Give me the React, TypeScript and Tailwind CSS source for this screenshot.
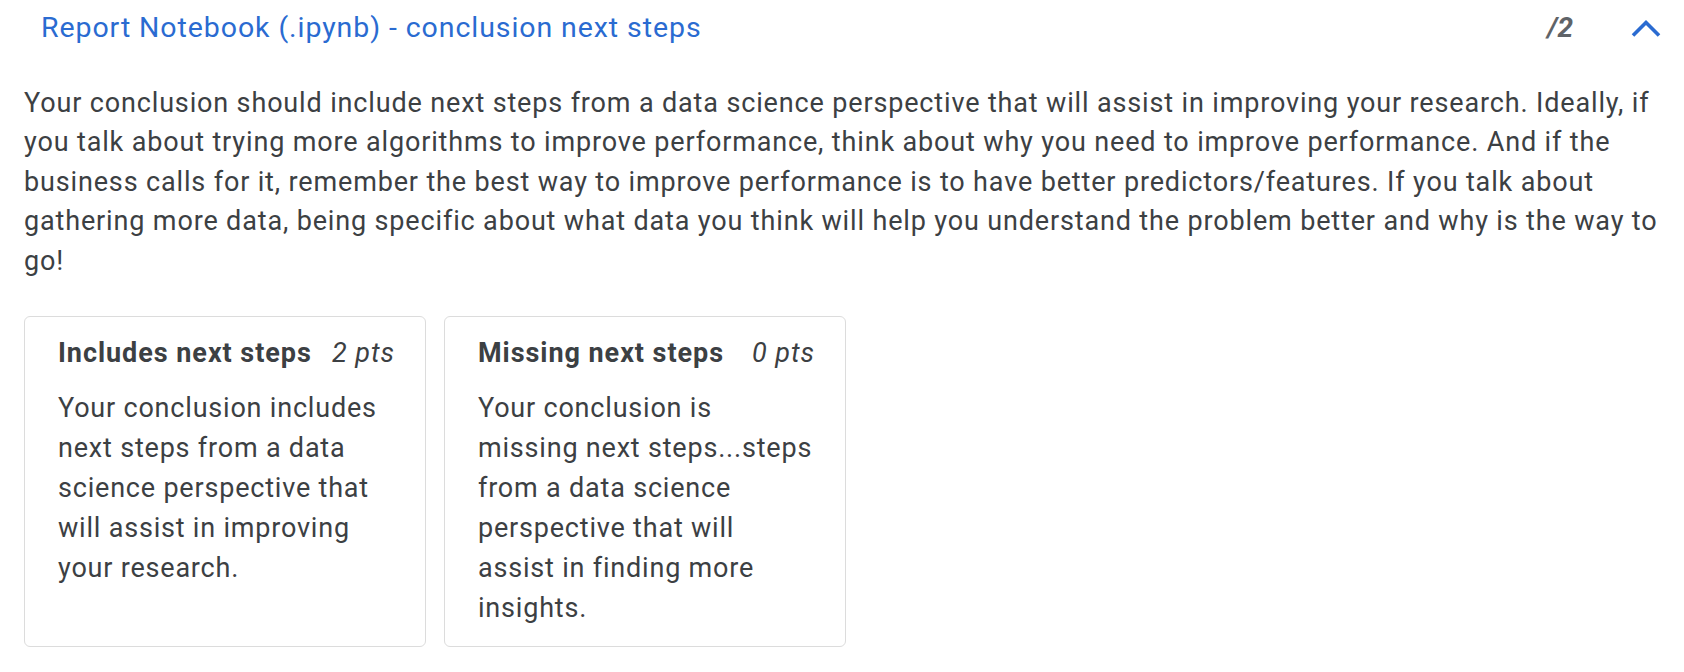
const ratings = [
  {
    title: "Includes next steps",
    pts: "2 pts",
    text: "Your conclusion includes next steps from a data science perspective that will assist in improving your research.",
  },
  {
    title: "Missing next steps",
    pts: "0 pts",
    text: "Your conclusion is missing next steps...steps from a data science perspective that will assist in finding more insights.",
  },
];

function Chevron() {
  return (
    <svg width="32" height="20" viewBox="0 0 32 20" fill="none" stroke="currentColor" strokeWidth="3.6">
      <polyline points="3,17.5 16,4.5 29,17.5" />
    </svg>
  );
}

export default function App() {
  return (
    <div className="min-h-screen bg-white font-['Roboto',sans-serif] text-[#3c4043]">
      <div className="flex items-center justify-between pl-[41px] pr-[22px] h-[56px]">
        <h3 className="text-[28.5px] text-[#2a6bd1] leading-none tracking-[0.92px]">
          Report Notebook (.ipynb) - conclusion next steps
        </h3>
        <div className="flex items-center gap-[57px]">
          <span className="text-[28px] font-bold italic text-[#5f6368] leading-none">/2</span>
          <span className="text-[#2a6bd1]">
            <Chevron />
          </span>
        </div>
      </div>

      <div className="px-6 pt-[28px]">
        <p className="text-[27px] leading-[39.4px] tracking-[0.85px] max-w-[1648px]">
          Your conclusion should include next steps from a data science perspective that will assist in improving your
          research. Ideally, if you talk about trying more algorithms to improve performance, think about why you need to
          improve performance. And if the business calls for it, remember the best way to improve performance is to have
          better predictors/features. If you talk about gathering more data, being specific about what data you think will
          help you understand the problem better and why is the way to go!
        </p>

        <div className="flex gap-[18px] mt-[35px]">
          {ratings.map((r) => (
            <div
              key={r.title}
              className="w-[402px] border border-[#dcdcdc] rounded-[6px] pl-[33px] pr-[30px] pt-[20px] pb-[18px]"
            >
              <div className="flex items-center justify-between text-[27px] leading-[32px] tracking-[0.95px]">
                <span className="font-bold">{r.title}</span>
                <span className="italic">{r.pts}</span>
              </div>
              <p className="mt-[19px] text-[27px] leading-[40px] tracking-[0.8px]">{r.text}</p>
            </div>
          ))}
        </div>
      </div>
    </div>
  );
}
